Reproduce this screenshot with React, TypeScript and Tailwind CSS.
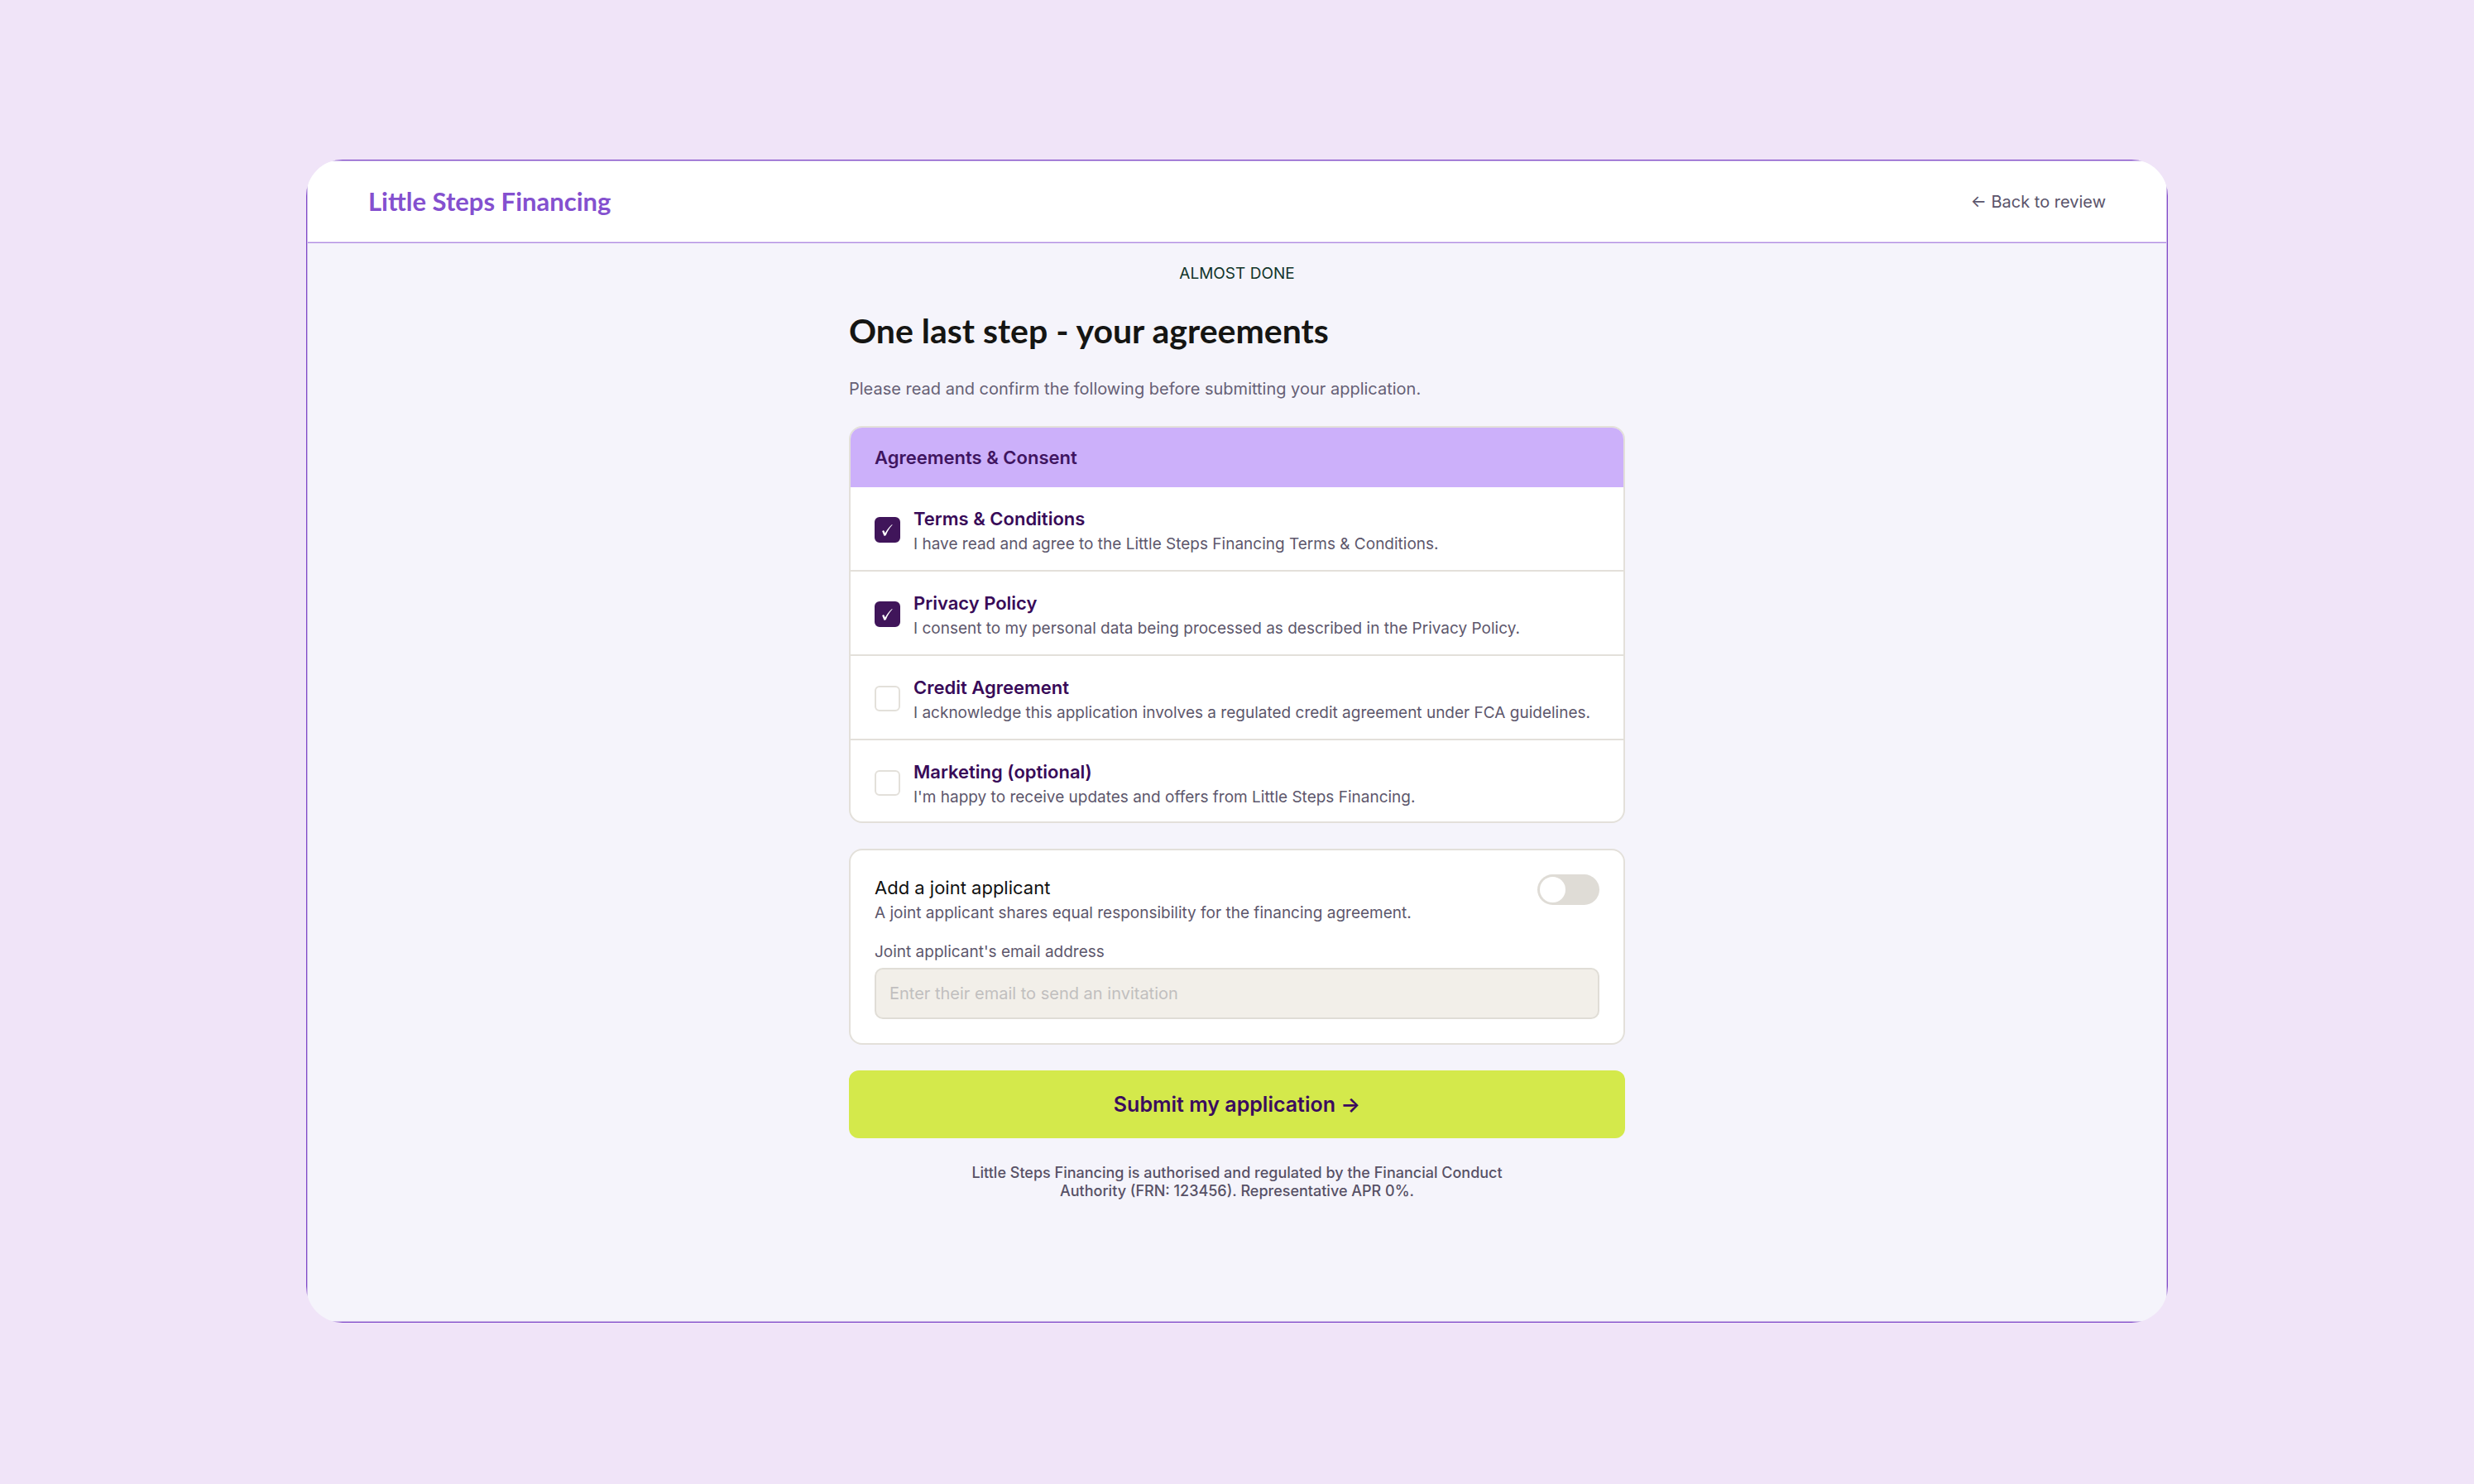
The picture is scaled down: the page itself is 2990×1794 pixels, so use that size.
import React from "react";

type Agreement = {
  id: string;
  title: string;
  detail: string;
  accepted: boolean;
};

const agreements: Agreement[] = [
  {
    id: "terms",
    title: "Terms & Conditions",
    detail: "I have read and agree to the Little Steps Financing Terms & Conditions.",
    accepted: true,
  },
  {
    id: "privacy",
    title: "Privacy Policy",
    detail: "I consent to my personal data being processed as described in the Privacy Policy.",
    accepted: true,
  },
  {
    id: "credit",
    title: "Credit Agreement",
    detail: "I acknowledge this application involves a regulated credit agreement under FCA guidelines.",
    accepted: false,
  },
  {
    id: "marketing",
    title: "Marketing (optional)",
    detail: "I'm happy to receive updates and offers from Little Steps Financing.",
    accepted: false,
  },
];

function SiteHeader() {
  return (
    <header className="flex items-center justify-between border-b border-[#b28ee2] bg-white px-[73px] py-7 shadow-[inset_0_-1px_0_#dccdf2]">
      <p className="pb-0.5 font-['Lato',sans-serif] text-[31px] leading-[40px] font-bold text-[#8450cf]">
        Little Steps Financing
      </p>
      <a href="#review" className="text-[20px] leading-[28px] text-[#5a546b]">
        ← Back to review
      </a>
    </header>
  );
}

function CheckMark() {
  return (
    <svg
      aria-hidden="true"
      viewBox="0 0 31 31"
      className="pointer-events-none hidden size-[31px] fill-white [grid-area:1/1] peer-checked:block"
    >
      <path d="M9.2 17.2C10 16 11.3 16 11.7 16.9L12.7 19.6C14.8 15.6 17.6 12 20.8 9.3L21.8 9.3C18.4 12.8 15.8 17 13.8 21.9C13.2 22.8 11.6 23 11.2 22.2C10.4 20.3 9.8 18.7 9.2 17.2Z" />
    </svg>
  );
}

function AgreementRow({ id, title, detail, accepted }: Agreement) {
  return (
    <li className="flex items-center gap-4 border-b-2 border-[#e3e0da] px-[29px] pt-5 pb-[18px] last:border-b-0 last:pb-4">
      <span className="grid size-[31px] shrink-0 place-items-center">
        <input
          id={id}
          type="checkbox"
          defaultChecked={accepted}
          aria-describedby={id + "-detail"}
          className="peer size-[31px] appearance-none rounded-[6px] border-2 border-[#e3e0da] bg-white [grid-area:1/1] checked:border-[#40155a] checked:bg-[#40155a]"
        />
        <CheckMark />
      </span>
      <div>
        <label htmlFor={id} className="block text-[22px] leading-[36px] font-semibold text-[#380a58]">
          {title}
        </label>
        <p id={id + "-detail"} className="text-[19px] leading-[26px] text-[#5d576c]">
          {detail}
        </p>
      </div>
    </li>
  );
}

function AgreementsCard() {
  return (
    <section className="mt-[29px] overflow-hidden rounded-2xl border-2 border-[#e3e0da] bg-white">
      <h2 className="bg-[#ccb0fa] px-[29px] py-5 text-[22px] leading-[32px] font-semibold text-[#3f1560]">
        Agreements &amp; Consent
      </h2>
      <ul>
        {agreements.map((item) => (
          <AgreementRow key={item.id} {...item} />
        ))}
      </ul>
    </section>
  );
}

function JointApplicantCard() {
  return (
    <section className="mt-[31px] rounded-2xl border-2 border-[#e3e0da] bg-white p-[29px]">
      <div className="flex items-start justify-between gap-4">
        <div>
          <label htmlFor="joint" className="block text-[22px] leading-[32px] text-[#111111]">
            Add a joint applicant
          </label>
          <p className="text-[19px] leading-[30px] text-[#5d576c]">
            A joint applicant shares equal responsibility for the financing agreement.
          </p>
        </div>
        <input
          id="joint"
          type="checkbox"
          role="switch"
          className="flex h-[37px] w-[75px] shrink-0 appearance-none items-center rounded-full bg-[#dfdcd6] px-[3px] before:size-[31px] before:rounded-full before:bg-white before:content-[''] checked:justify-end checked:bg-[#40155a]"
        />
      </div>
      <label htmlFor="joint-email" className="mt-[18px] block text-[19px] leading-[28px] text-[#5d576c]">
        Joint applicant's email address
      </label>
      <input
        id="joint-email"
        type="email"
        placeholder="Enter their email to send an invitation"
        className="mt-[5px] block h-[62px] w-full rounded-[10px] border-2 border-[#e0ddd6] bg-[#f2efe9] px-4 text-[20px] text-[#111111] placeholder:text-[#c1bfbf]"
      />
    </section>
  );
}

export default function App() {
  return (
    <div className="flex min-h-screen flex-col bg-[#f0e4f8] px-[370px] pt-[193px] pb-[195px] font-['Inter',sans-serif]">
      <div className="flex flex-1 flex-col overflow-hidden rounded-[44px]">
        <div className="flex flex-1 flex-col border border-[#7f47c8]">
          <div className="flex flex-1 flex-col border border-[#cdbbe8] bg-[#f5f4fb]">
            <SiteHeader />
            <main className="mx-auto w-full max-w-[938px] pt-[25px] pb-10">
              <p className="text-center text-[19px] leading-[24px] text-[#12352a]">ALMOST DONE</p>
              <h1 className="mt-[29px] font-['Lato',sans-serif] text-[41px] leading-[56px] font-bold text-[#151513]">
                One last step - your agreements
              </h1>
              <p className="mt-[26px] text-[20px] leading-[32px] text-[#666075]">
                Please read and confirm the following before submitting your application.
              </p>
              <form onSubmit={(event) => event.preventDefault()}>
                <AgreementsCard />
                <JointApplicantCard />
                <button
                  type="submit"
                  className="mt-[31px] h-[82px] w-full rounded-xl bg-[#d4e94b] text-[25px] leading-[34px] font-semibold text-[#3b0b5e]"
                >
                  Submit my application →
                </button>
              </form>
              <p className="mx-auto mt-[31px] max-w-[680px] text-center text-[18px] leading-[22px] font-medium text-[#575166]">
                Little Steps Financing is authorised and regulated by the Financial Conduct Authority (FRN: 123456).
                Representative APR 0%.
              </p>
            </main>
          </div>
        </div>
      </div>
    </div>
  );
}
